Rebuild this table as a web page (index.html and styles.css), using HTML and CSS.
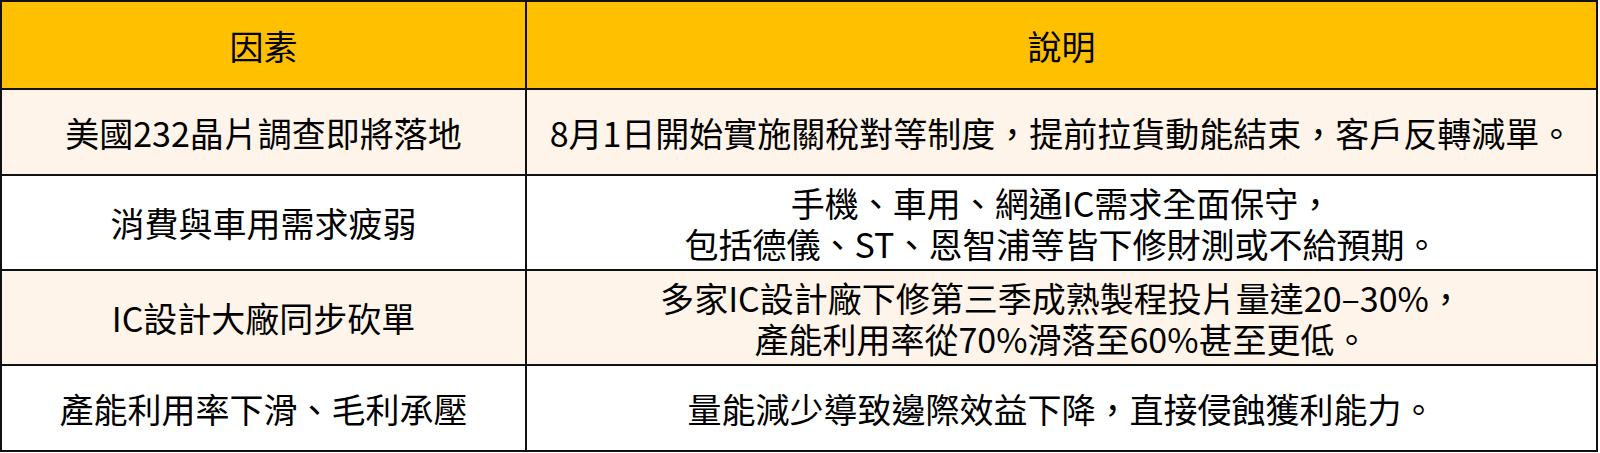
FILE: index.html
```html
<!DOCTYPE html>
<html lang="zh-Hant">
<head>
<meta charset="utf-8">
<title>因素與說明</title>
<link rel="stylesheet" href="styles.css">
</head>
<body>
<table class="factors">
  <colgroup>
    <col class="col-factor">
    <col class="col-desc">
  </colgroup>
  <thead>
    <tr class="row-head">
      <th>因素</th>
      <th>說明</th>
    </tr>
  </thead>
  <tbody>
    <tr class="row-single shaded">
      <td>美國232晶片調查即將落地</td>
      <td>8月1日開始實施關稅對等制度，提前拉貨動能結束，客戶反轉減單。</td>
    </tr>
    <tr class="row-double">
      <td>消費與車用需求疲弱</td>
      <td><div class="line">手機、車用、網通IC需求全面保守，</div><div class="line">包括德儀、ST、恩智浦等皆下修財測或不給預期。</div></td>
    </tr>
    <tr class="row-double shaded">
      <td>IC設計大廠同步砍單</td>
      <td><div class="line">多家IC設計廠下修第三季成熟製程投片量達20–30%，</div><div class="line">產能利用率從70%滑落至60%甚至更低。</div></td>
    </tr>
    <tr class="row-single">
      <td>產能利用率下滑、毛利承壓</td>
      <td>量能減少導致邊際效益下降，直接侵蝕獲利能力。</td>
    </tr>
  </tbody>
</table>
</body>
</html>
```

FILE: styles.css
```css
html, body {
  margin: 0;
  padding: 0;
  background: #ffffff;
}

.factors {
  border-collapse: collapse;
  width: 1598px;
  table-layout: fixed;
  font-family: "Noto Sans CJK TC", "Noto Sans", sans-serif;
  font-size: 34px;
  line-height: 41px;
  color: #000;
  border: 2px solid #222;
}

.col-factor { width: 525px; }

.factors th,
.factors td {
  border: 2px solid #111;
  text-align: center;
  vertical-align: middle;
  padding: 0 12px;
  white-space: nowrap;
  font-weight: 400;
}

.line {
  height: 41px;
  line-height: 41px;
  overflow: visible;
}

.row-head {
  height: 88px;
  background: #ffc000;
}

.row-single { height: 86px; }
.row-double { height: 95px; }

.shaded { background: #fef4e9; }
```
